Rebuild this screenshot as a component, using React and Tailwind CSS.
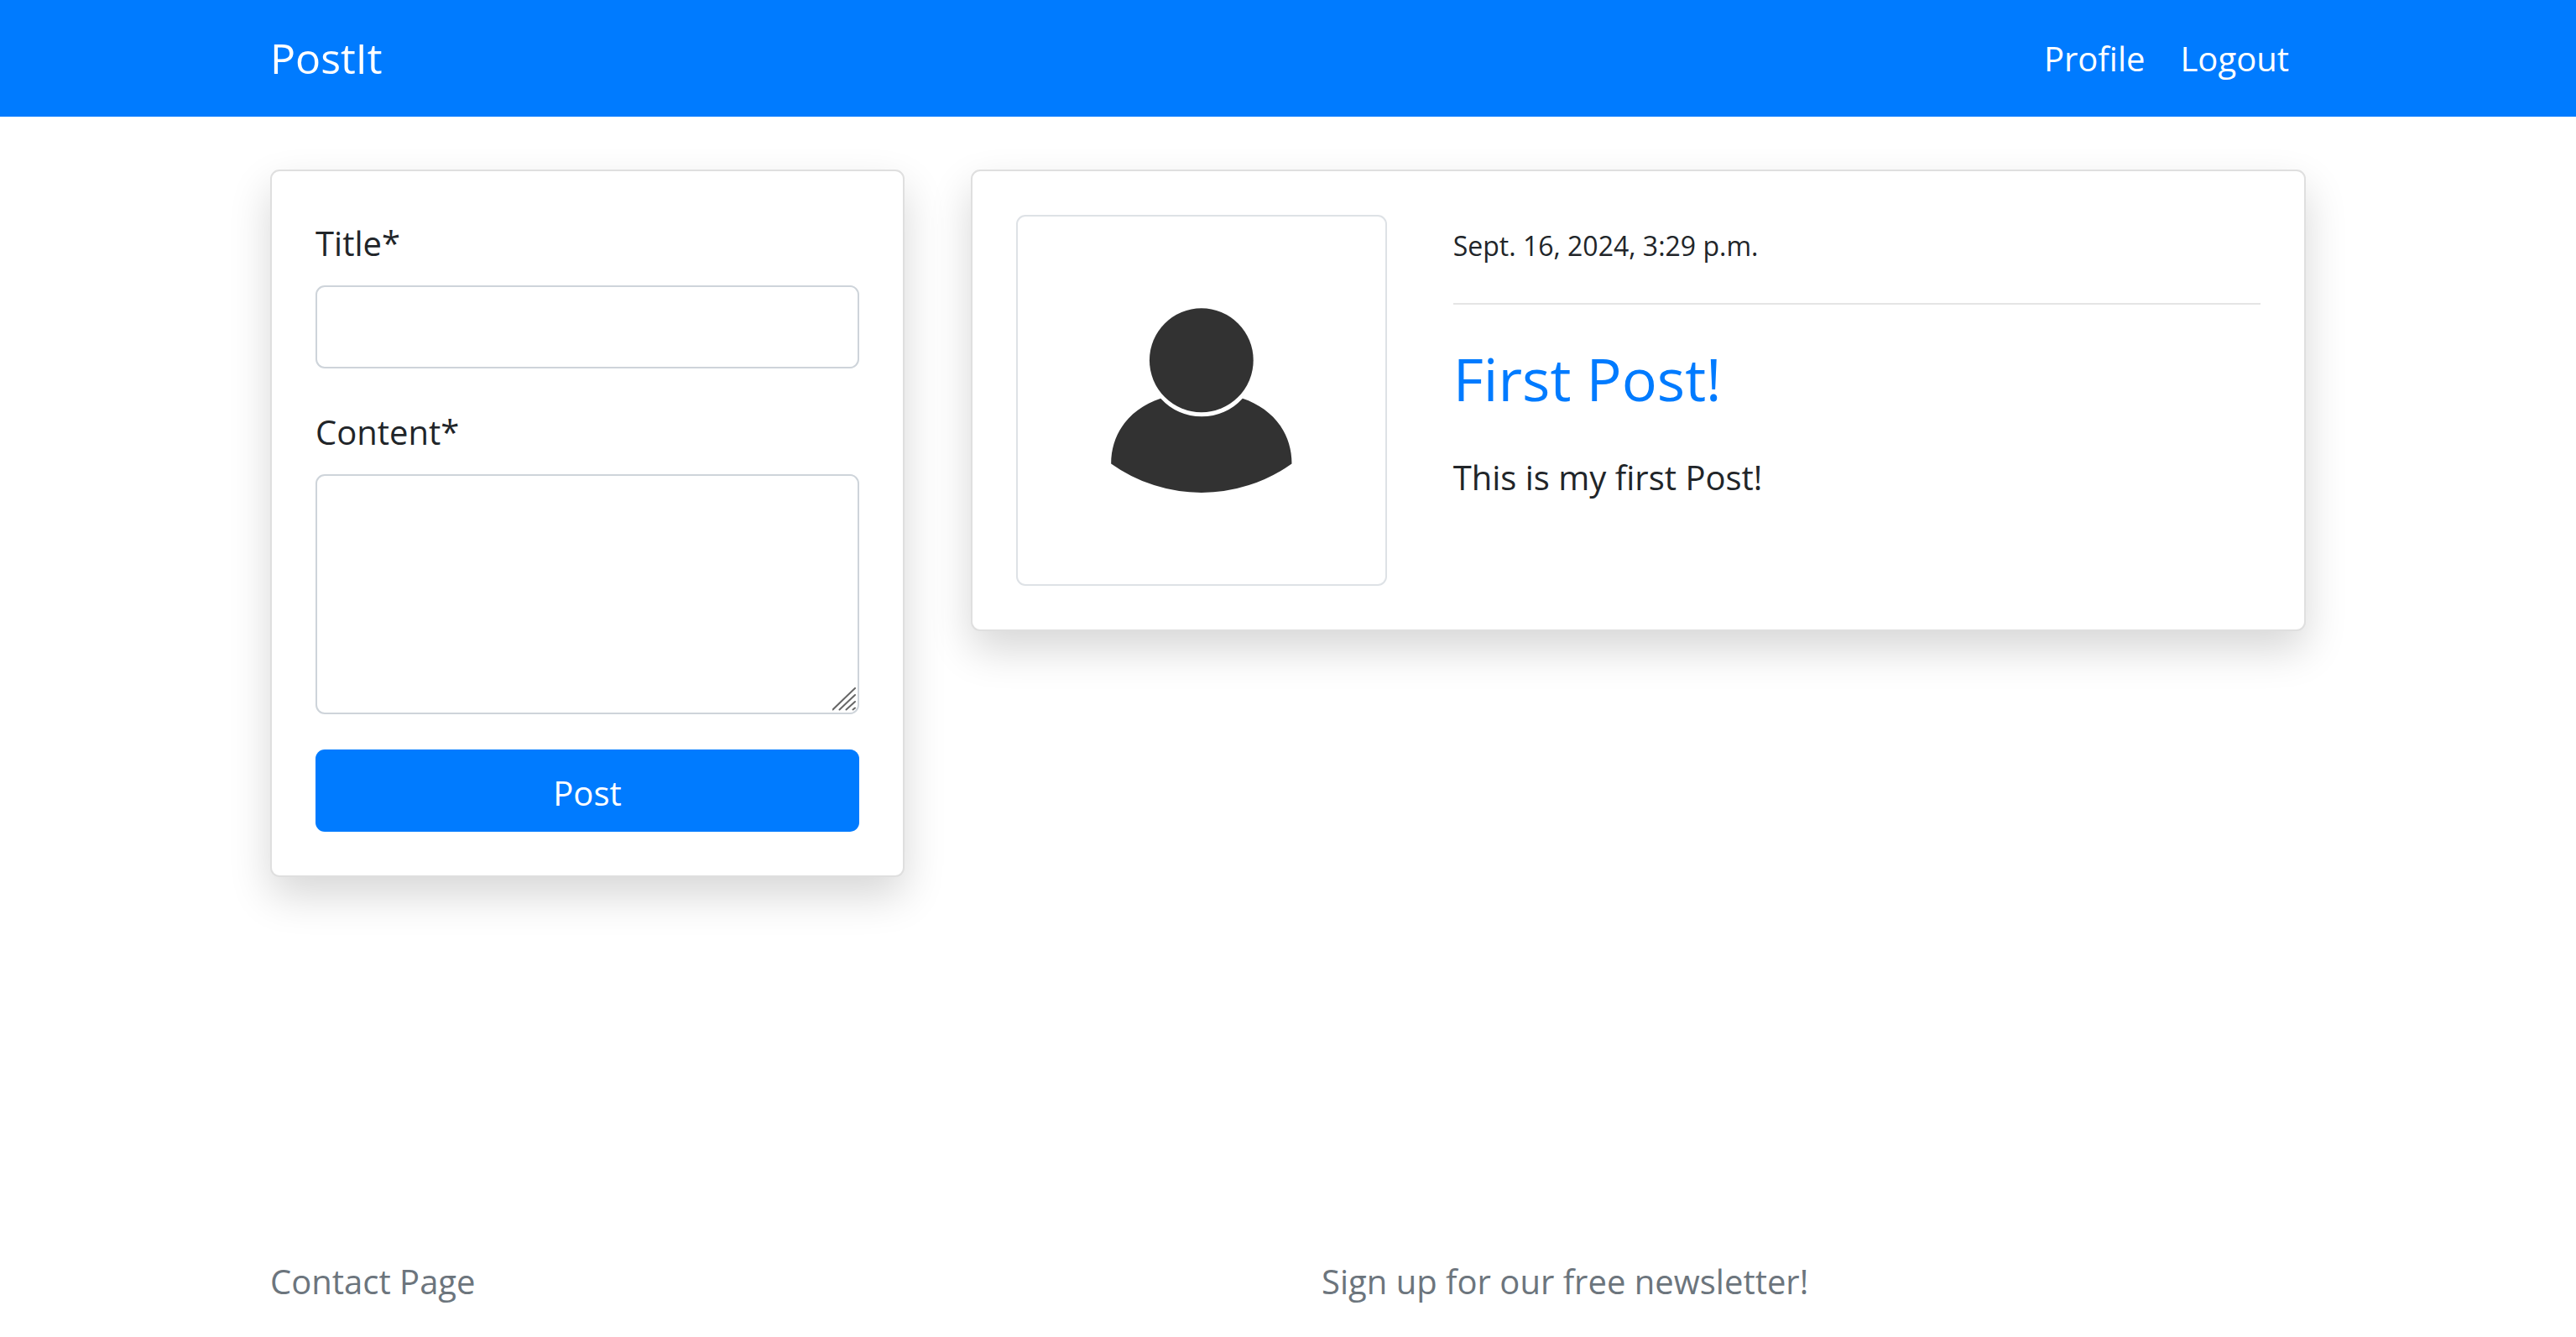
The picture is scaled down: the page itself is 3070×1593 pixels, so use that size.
const fieldClass =
  "block w-full rounded-[11px] border-2 border-[#ced4da] bg-white px-8 text-[40px] leading-[63px] outline-none focus:border-[#80bdff]";
const labelClass = "mb-4 block text-[40px] leading-[68px]";
const cardClass =
  "rounded-[11px] border-2 border-[#dfdfdf] bg-white p-[52px] shadow-[0_22px_50px_rgba(0,0,0,0.16)]";

function Navbar() {
  return (
    <header className="bg-[#007bff] px-10 pt-[30px] pb-[31px] text-white">
      <nav className="mx-auto flex w-full max-w-[2426px] items-center justify-between">
        <a href="#home" className="text-[50px] leading-[78px]">
          PostIt
        </a>
        <ul className="flex gap-[42px] pr-5 text-[40px] leading-[63px]">
          <li>
            <a href="#profile">Profile</a>
          </li>
          <li>
            <a href="#logout">Logout</a>
          </li>
        </ul>
      </nav>
    </header>
  );
}

function ResizeGrip() {
  return (
    <svg
      className="pointer-events-none absolute right-1 bottom-1 size-7"
      viewBox="0 0 28 28"
      stroke="#666666"
      strokeWidth="2"
      strokeLinecap="round"
      aria-hidden="true"
    >
      <path d="M0.5 26.5 27 1M8.5 26.5 27 9M16.5 26.5 27 17M24.5 26.5 27 24.5" />
    </svg>
  );
}

function PostForm() {
  return (
    <form className={cardClass} onSubmit={(event) => event.preventDefault()}>
      <div className="mb-[42px]">
        <label htmlFor="title" className={labelClass}>
          Title*
        </label>
        <input id="title" type="text" className={fieldClass + " h-[99px]"} />
      </div>
      <div className="mb-[42px]">
        <label htmlFor="content" className={labelClass}>
          Content*
        </label>
        <div className="relative">
          <textarea id="content" className={fieldClass + " h-[286px] resize-none py-4"} />
          <ResizeGrip />
        </div>
      </div>
      <button
        type="submit"
        className="block h-[98px] w-full rounded-[11px] bg-[#007bff] pt-1 text-center text-[40px] leading-[63px] text-white"
      >
        Post
      </button>
    </form>
  );
}

function Avatar() {
  return (
    <div className="aspect-square self-start rounded-[11px] border-2 border-[#dee2e6]">
      <svg viewBox="2 2 437 437" className="block h-full w-full" fill="#323232" role="img" aria-label="Author">
        <circle cx="220.5" cy="173" r="61.8" />
        <path d="M172 218.5A66 66 0 0 0 269.5 218.5C304 230 328 258 328 296A185 185 0 0 1 113 296C113 258 137 230 172 218.5Z" />
      </svg>
    </div>
  );
}

function Post() {
  return (
    <article className={cardClass + " col-span-2 grid grid-cols-3 gap-[79px] self-start"}>
      <Avatar />
      <div className="col-span-2">
        <p className="text-[32px] leading-[73px]">Sept. 16, 2024, 3:29 p.m.</p>
        <hr className="mt-8 mb-11 border-t-2 border-[#e5e5e5]" />
        <h2 className="mb-[42px] text-[70px] leading-[88px] text-[#007bff]">
          <a href="#first-post">First Post!</a>
        </h2>
        <p className="text-[40px] leading-[63px]">This is my first Post!</p>
      </div>
    </article>
  );
}

export default function App() {
  return (
    <div className="flex min-h-screen flex-col bg-white font-['Open_Sans',sans-serif] text-[#212529]">
      <Navbar />
      <main className="px-10 pt-[63px] pb-20">
        <div className="mx-auto grid w-full max-w-[2426px] grid-cols-3 items-start gap-[79px]">
          <PostForm />
          <Post />
        </div>
      </main>
      <footer className="mt-auto px-10 pb-[35px] text-[40px] leading-[63px] text-[#6c757d]">
        <div className="mx-auto grid w-full max-w-[2426px] grid-cols-2 gap-20">
          <a href="#contact">Contact Page</a>
          <a href="#newsletter">Sign up for our free newsletter!</a>
        </div>
      </footer>
    </div>
  );
}
